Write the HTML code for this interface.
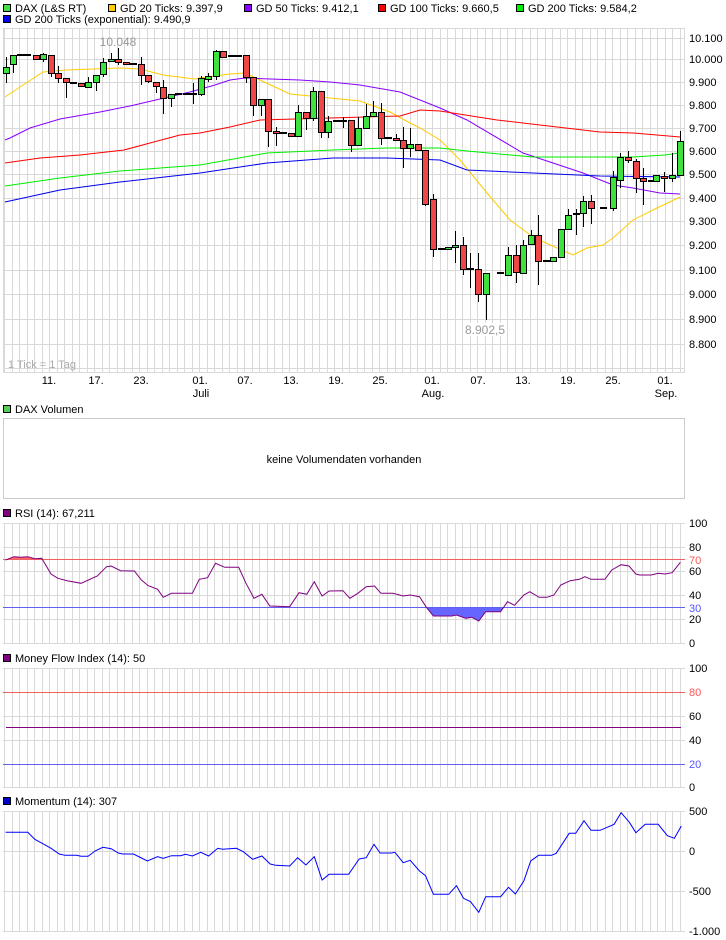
<!DOCTYPE html>
<html><head><meta charset="utf-8"><style>
html,body{margin:0;padding:0;background:#fff;width:726px;height:940px;overflow:hidden}
svg{display:block;font-family:"Liberation Sans",Arial,sans-serif;font-size:11px}
</style></head><body>
<svg id="s" width="726" height="940" viewBox="0 0 726 940" xmlns="http://www.w3.org/2000/svg">
<g id="grid"></g>
<g id="lines"></g>
<g id="candles"></g>
<rect x="3.5" y="4.5" width="7" height="7" fill="#44dd44" stroke="#000"/><text x="15" y="12">DAX (L&amp;S RT)</text>
<rect x="108.5" y="4.5" width="7" height="7" fill="#ffcc00" stroke="#000"/><text x="120" y="12">GD 20 Ticks: 9.397,9</text>
<rect x="244.5" y="4.5" width="7" height="7" fill="#8800ff" stroke="#000"/><text x="256" y="12">GD 50 Ticks: 9.412,1</text>
<rect x="378.5" y="4.5" width="7" height="7" fill="#ff0000" stroke="#000"/><text x="390" y="12">GD 100 Ticks: 9.660,5</text>
<rect x="516.5" y="4.5" width="7" height="7" fill="#00ee00" stroke="#000"/><text x="528" y="12">GD 200 Ticks: 9.584,2</text>
<rect x="3.5" y="15.5" width="7" height="7" fill="#0000ee" stroke="#000"/><text x="15" y="23">GD 200 Ticks (exponential): 9.490,9</text>
<text x="118" y="46" fill="#999" text-anchor="middle" font-size="12">10.048</text>
<rect x="463" y="323" width="44" height="13" fill="#fff"/>
<text x="485" y="334" fill="#999" text-anchor="middle" font-size="12">8.902,5</text>
<text x="8" y="368" fill="#aaa">1 Tick = 1 Tag</text>
<g id="axis"></g>
<rect x="3.5" y="418.5" width="681" height="80" fill="none" stroke="#ccc"/>
<rect x="3.5" y="405.5" width="7" height="7" fill="#55cc55" stroke="#000"/><text x="15" y="413">DAX Volumen</text>
<text x="344" y="463" text-anchor="middle">keine Volumendaten vorhanden</text>
<rect x="3.5" y="509.5" width="7" height="7" fill="#800080" stroke="#000"/><text x="15" y="517">RSI (14): 67,211</text>
<rect x="3.5" y="654.5" width="7" height="7" fill="#800080" stroke="#000"/><text x="15" y="662">Money Flow Index (14): 50</text>
<rect x="3.5" y="797.5" width="7" height="7" fill="#0000cc" stroke="#000"/><text x="15" y="805">Momentum (14): 307</text>
</svg>
<script>
var NS="http://www.w3.org/2000/svg";
function add(g,tag,attrs,txt){var e=document.createElementNS(NS,tag);for(var k in attrs)e.setAttribute(k,attrs[k]);if(txt!==undefined)e.textContent=txt;document.getElementById(g).appendChild(e);return e;}
function vgrid(y1,y2){for(var x=4;x<=685;x+=7.51){add('grid','line',{x1:Math.round(x)+.5,x2:Math.round(x)+.5,y1:y1,y2:y2,stroke:'#d9d9d9'});}}
function hline(y,x1,x2,c,g){add(g||'grid','line',{x1:x1,x2:x2,y1:y+.5,y2:y+.5,stroke:c});}
vgrid(28,372);
var ml=[[38,'10.100'],[59,'10.000'],[82,'9.900'],[105,'9.800'],[128,'9.700'],[151,'9.600'],[174,'9.500'],[198,'9.400'],[221,'9.300'],[245,'9.200'],[270,'9.100'],[294,'9.000'],[319,'8.900'],[344,'8.800'],[368,'']];
ml.forEach(function(a){hline(a[0],3,685,'#d9d9d9');if(a[1])add('axis','text',{x:689,y:a[0]+4},a[1]);});
hline(28,3,685,'#d9d9d9');hline(372,3,685,'#d9d9d9');
add('grid','line',{x1:684.5,x2:684.5,y1:28,y2:372,stroke:'#d9d9d9'});
add('grid','line',{x1:3.5,x2:3.5,y1:28,y2:372,stroke:'#d9d9d9'});
var dl=[[49,'11.'],[96,'17.'],[141,'23.'],[200,'01.'],[245,'07.'],[291,'13.'],[336,'19.'],[380,'25.'],[432,'01.'],[478,'07.'],[523,'13.'],[568,'19.'],[613,'25.'],[665,'01.']];
dl.forEach(function(a){add('axis','text',{x:a[0],y:384,'text-anchor':'middle'},a[1]);});
add('axis','text',{x:201,y:397,'text-anchor':'middle'},'Juli');
add('axis','text',{x:433,y:397,'text-anchor':'middle'},'Aug.');
add('axis','text',{x:666,y:397,'text-anchor':'middle'},'Sep.');
vgrid(523,643);
[[523,'100'],[547,'80'],[571,'60'],[595,'40'],[619,'20'],[643,'0']].forEach(function(a){hline(a[0],3,685,'#d9d9d9');add('axis','text',{x:689,y:a[0]+4},a[1]);});
add('axis','text',{x:689,y:564,fill:'#ff5555'},'70');add('axis','text',{x:689,y:612,fill:'#5555ff'},'30');
vgrid(668,787);
[[668,'100'],[716,'60'],[740,'40'],[787,'0']].forEach(function(a){hline(a[0],3,685,'#d9d9d9');add('axis','text',{x:689,y:a[0]+4},a[1]);});
hline(692,3,685,'#f06060','lines');add('axis','text',{x:689,y:696,fill:'#ff5555'},'80');
hline(764,3,685,'#6060f0','lines');add('axis','text',{x:689,y:768,fill:'#5555ff'},'20');
hline(727,6,681,'#800080','lines');
vgrid(811,931);
[[811,'500'],[851,'0'],[891,'-500'],[931,'-1.000']].forEach(function(a){hline(a[0],3,685,'#d9d9d9');add('axis','text',{x:689,y:a[0]+4},a[1]);});
function pl(pts,c,w,g){add(g||'lines','polyline',{points:pts.map(function(p){return p.join(',')}).join(' '),fill:'none',stroke:c,'stroke-width':w||1});}
pl([[5,97],[20,87],[43,72],[66,70],[120,68],[140,69],[163,75],[195,79],[200,78],[230,74],[245,73],[260,80],[290,94],[330,98],[360,101],[390,112],[410,123],[420,128],[440,140],[460,160],[487,193],[510,220],[533,237],[557,248],[573,255],[587,248],[603,245],[613,238],[633,220],[657,208],[680,197]],'#ffcc00');
pl([[5,140],[10,138],[30,128],[60,119],[100,112],[130,106],[160,99],[190,92],[215,85],[230,80],[245,78],[270,79],[300,80],[330,82],[360,85],[400,92],[440,108],[467,120],[523,153],[583,173],[613,185],[633,188],[660,193],[680,194]],'#8800ff');
pl([[5,163],[40,158],[80,155],[124,150],[150,143],[180,135],[200,133],[230,127],[260,120],[330,118],[400,116],[420,110],[440,111],[497,120],[600,132],[633,133],[680,137]],'#ff0000');
pl([[5,186],[60,178],[120,171],[200,165],[267,153],[333,150],[387,148],[440,148],[467,151],[533,157],[633,157],[665,155],[680,153]],'#00ee00');
pl([[5,202],[60,190],[120,182],[200,173],[267,163],[333,158],[387,158],[440,160],[467,170],[533,173],[600,176],[680,177]],'#0000ee');
var C=[[6,67,73,57,83,'g'],[13,55,64,55,73,'g'],[20,55,55,55,55,'d'],[27,55,55,55,55,'d'],[36,55,59,55,59,'r'],[43,54,59,53,62,'g'],[51,55,73,55,77,'r'],[58,73,78,66,83,'r'],[66,78,82,78,98,'r'],[73,83,83,83,83,'d'],[81,83,86,83,86,'r'],[88,82,87,77,88,'g'],[96,75,82,75,91,'g'],[103,62,74,58,77,'g'],[111,59,61,53,61,'g'],[118,59,62,48,65,'r'],[126,62,64,62,64,'r'],[133,64,64,64,64,'d'],[141,64,75,57,85,'r'],[148,75,81,75,83,'r'],[156,82,86,82,93,'r'],[163,87,98,80,114,'r'],[171,94,98,94,107,'g'],[178,94,94,94,94,'d'],[186,94,94,94,94,'d'],[193,94,94,83,104,'d'],[201,78,94,76,96,'g'],[208,76,79,73,82,'g'],[216,51,76,50,80,'g'],[223,51,57,51,58,'r'],[231,56,56,56,56,'d'],[238,56,56,56,56,'d'],[246,55,77,55,83,'r'],[253,77,105,77,116,'r'],[261,99,105,99,116,'g'],[268,99,131,99,147,'r'],[276,131,133,127,146,'r'],[283,133,133,133,133,'d'],[291,133,136,133,136,'r'],[298,112,136,105,136,'g'],[306,112,118,112,130,'r'],[313,91,118,87,121,'g'],[321,91,132,91,138,'r'],[328,121,132,116,138,'g'],[336,121,121,121,121,'d'],[343,121,121,117,128,'d'],[351,120,145,120,152,'r'],[358,128,145,117,145,'g'],[366,116,128,104,129,'g'],[373,112,116,101,116,'g'],[381,112,138,103,145,'r'],[388,138,138,138,138,'d'],[396,138,140,134,140,'r'],[403,140,148,127,168,'r'],[410,144,148,128,157,'g'],[418,144,150,144,150,'r'],[425,150,204,150,206,'r'],[433,199,249,194,257,'r'],[441,249,249,249,249,'d'],[448,247,249,247,249,'g'],[455,245,247,231,263,'g'],[463,245,269,237,275,'r'],[470,269,269,253,288,'d'],[478,269,294,253,302,'r'],[486,273,294,273,320,'g'],[500,273,273,273,273,'d'],[508,255,275,247,275,'g'],[516,255,272,245,283,'r'],[523,245,273,240,273,'g'],[531,235,244,230,244,'g'],[538,235,261,215,285,'r'],[546,261,261,261,261,'d'],[553,257,261,257,261,'g'],[561,229,257,229,257,'g'],[568,215,229,209,229,'g'],[576,214,214,209,235,'d'],[583,201,213,196,227,'g'],[591,201,208,195,224,'r'],[603,208,208,208,208,'d'],[613,177,208,171,211,'g'],[620,157,180,153,188,'g'],[628,157,160,151,163,'r'],[636,161,178,159,193,'r'],[643,178,181,168,205,'r'],[651,181,181,181,181,'d'],[656,175,181,175,181,'g'],[664,176,178,172,192,'r'],[672,175,178,153,182,'g'],[680,141,175,131,175,'g']];
C.forEach(function(c){var x=c[0];
 if(c[4]>c[3])add('candles','line',{x1:x+.5,x2:x+.5,y1:c[3],y2:c[4],stroke:'#000'});
 if(c[5]=='d'){add('candles','rect',{x:x-3,y:c[1]-1,width:7,height:2,fill:'#000'});}
 else add('candles','rect',{x:x-2.5,y:c[1]+.5,width:6,height:Math.max(1,c[2]-c[1]),fill:c[5]=='g'?'#3ee23e':'#f04646',stroke:'#000'});
});
var R=[[12,180],[30,170],[45,172],[60,170],[75,176],[90,175],[110,222],[125,235],[145,242],[175,250],[210,228],[230,200],[240,198],[260,212],[290,213],[305,240],[320,257],[340,268],[352,292],[370,280],[415,280],[430,238],[448,233],[465,190],[485,202],[515,202],[530,248],[548,295],[565,283],[582,318],[625,320],[645,278],[662,283],[678,245],[695,288],[710,273],[740,272],[755,295],[772,280],[790,260],[808,258],[822,280],[848,280],[870,288],[885,285],[905,290],[920,322],[935,348],[975,348],[985,345],[1005,355],[1018,352],[1033,363],[1048,335],[1080,335],[1095,305],[1110,316],[1130,285],[1143,275],[1163,292],[1180,292],[1195,285],[1210,255],[1230,242],[1250,238],[1262,230],[1275,238],[1305,238],[1320,210],[1340,194],[1357,198],[1372,222],[1380,225],[1405,225],[1420,220],[1435,222],[1450,218],[1468,187]].map(function(p){return [+(p[0]*0.4635).toFixed(1),+(500+p[1]/3).toFixed(1)];});
var s=document.getElementById('s');
var d=document.createElementNS(NS,'defs');d.innerHTML='<clipPath id="ca"><rect x="0" y="0" width="726" height="560"/></clipPath><clipPath id="cb"><rect x="0" y="608" width="726" height="40"/></clipPath>';s.insertBefore(d,s.firstChild);
var pts=R.map(function(p){return p.join(',')}).join(' ');
add('lines','polygon',{points:pts+' '+R[R.length-1][0]+',560 '+R[0][0]+',560',fill:'#ff6666','clip-path':'url(#ca)'});
add('lines','polygon',{points:pts+' '+R[R.length-1][0]+',608 '+R[0][0]+',608',fill:'#6666ff','clip-path':'url(#cb)'});
hline(559,3,685,'#f06060','lines');hline(607,3,685,'#6060f0','lines');
pl(R,'#800080',1);
var M=[[12,127],[60,127],[75,148],[95,163],[110,175],[128,192],[140,196],[165,196],[175,199],[190,199],[205,183],[222,172],[240,176],[255,189],[265,192],[288,192],[305,204],[318,213],[340,200],[352,205],[370,197],[390,197],[400,193],[415,198],[433,187],[450,198],[470,175],[480,178],[510,175],[525,185],[545,208],[565,198],[583,222],[595,226],[625,228],[642,203],[660,225],[678,200],[695,270],[710,253],[752,253],[775,207],[790,203],[807,163],[820,189],[845,189],[852,187],[870,218],[885,211],[905,243],[918,257],[935,313],[968,313],[985,287],[1000,325],[1015,335],[1033,367],[1048,320],[1080,320],[1097,292],[1112,312],[1130,273],[1145,213],[1162,196],[1190,196],[1200,190],[1228,130],[1242,130],[1260,92],[1275,121],[1295,121],[1325,103],[1340,68],[1358,97],[1372,128],[1392,103],[1420,103],[1440,137],[1455,145],[1470,108]].map(function(p){return [+(p[0]*0.4635).toFixed(1),+(790+p[1]/3).toFixed(1)];});
pl(M,'#0000ff',1);
</script>
</body></html>
